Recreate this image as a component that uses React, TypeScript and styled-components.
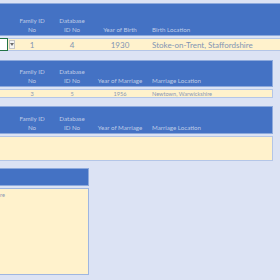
import styled, { createGlobalStyle } from 'styled-components'

const GlobalStyle = createGlobalStyle`
	html, body {
		margin: 0;
		background: #dce3f4;
		overflow: hidden;
		font-family: Lato, 'Liberation Sans', sans-serif;
	}
`

type Column = { title: [string, string], value?: string, align: 'center' | 'left' }

const birthColumns: Column[] = [
	{ title: ['Family ID', 'No'], value: '1', align: 'center' },
	{ title: ['Database', 'ID No'], value: '4', align: 'center' },
	{ title: ['', 'Year of Birth'], value: '1930', align: 'center' },
	{ title: ['', 'Birth Location'], value: 'Stoke-on-Trent, Staffordshire', align: 'left' }
]

const marriageColumns: Column[] = [
	{ title: ['Family ID', 'No'], value: '3', align: 'center' },
	{ title: ['Database', 'ID No'], value: '5', align: 'center' },
	{ title: ['', 'Year of Marriage'], value: '1956', align: 'center' },
	{ title: ['', 'Marriage Location'], value: 'Newtown, Warwickshire', align: 'left' }
]

const emptyColumns: Column[] = [
	{ title: ['Family ID', 'No'], align: 'center' },
	{ title: ['Database', 'ID No'], align: 'center' },
	{ title: ['', 'Year of Marriage'], align: 'center' },
	{ title: ['', 'Marriage Location'], align: 'left' }
]

export default function App () {
	return (
		<>
			<GlobalStyle />
			<Sheet>
				<Panel $width='300px' $top={4}>
					<Header $height={33}>
						<Cell />
						{birthColumns.map(c => (
							<HeadCell key={c.title[1]} $align={c.align}>
								<span>{c.title[0]}</span>
								<span>{c.title[1]}</span>
							</HeadCell>
						))}
					</Header>
					<Row $height={13} $size={8} $color='#8295b3'>
						<Combo>
							<ComboInput />
							<ComboButton>
								<svg width='4' height='3' viewBox='0 0 4 3'>
									<path d='M0 0h4L2 3z' fill='#6b6b6b' />
								</svg>
							</ComboButton>
						</Combo>
						{birthColumns.map(c => (
							<ValueCell key={c.title[1]} $align={c.align}>{c.value}</ValueCell>
						))}
					</Row>
				</Panel>

				<Panel $width='273px' $top={10}>
					<Header $height={27}>
						<Cell />
						{marriageColumns.map(c => (
							<HeadCell key={c.title[1]} $align={c.align}>
								<span>{c.title[0]}</span>
								<span>{c.title[1]}</span>
							</HeadCell>
						))}
					</Header>
					<Row $height={9} $size={5.6} $color='#8a98b4'>
						<Cell />
						{marriageColumns.map(c => (
							<ValueCell key={c.title[1]} $align={c.align}>{c.value}</ValueCell>
						))}
					</Row>
				</Panel>

				<Panel $width='273px' $top={9}>
					<Header $height={28}>
						<Cell />
						{emptyColumns.map(c => (
							<HeadCell key={c.title[1]} $align={c.align}>
								<span>{c.title[0]}</span>
								<span>{c.title[1]}</span>
							</HeadCell>
						))}
					</Header>
					<Row $height={25} $size={6} $color='#8a98b4' />
				</Panel>

				<Panel $width='89px' $top={8}>
					<Header $height={18} />
					<Notes>re</Notes>
				</Panel>
			</Sheet>
		</>
	)
}

const Sheet = styled.main`
	width: 280px;
	height: 280px;
	overflow: hidden;
	display: flex;
	flex-direction: column;
`

const Panel = styled.section<{ $width: string, $top: number }>`
	width: ${p => p.$width};
	margin-top: ${p => p.$top - 1}px;
	display: flex;
	flex-direction: column;
	gap: 2px;
	flex-shrink: 0;
`

const grid = `
	display: grid;
	grid-template-columns: 15px 34px 46px 50px 1fr;
	box-sizing: border-box;
`

const Header = styled.div<{ $height: number }>`
	${grid}
	height: ${p => p.$height}px;
	background: #4472c4;
	border: 1px solid #8eaadc;
	border-left: none;
	padding-bottom: 1px;
`

const Cell = styled.div``

const HeadCell = styled.div<{ $align: 'center' | 'left' }>`
	align-self: end;
	display: flex;
	flex-direction: column;
	align-items: ${p => p.$align === 'center' ? 'center' : 'flex-start'};
	padding-left: ${p => p.$align === 'left' ? '7px' : '0'};
	font-size: 6.2px;
	line-height: 8.4px;
	color: #bfcbe6;
	white-space: nowrap;
`

const Row = styled.div<{ $height: number, $size: number, $color: string }>`
	${grid}
	height: ${p => p.$height}px;
	background: #fff2cc;
	border: 1px solid #b4c6e7;
	border-left: none;
	align-items: center;
	font-size: ${p => p.$size}px;
	color: ${p => p.$color};
`

const ValueCell = styled.div<{ $align: 'center' | 'left' }>`
	text-align: ${p => p.$align};
	padding-left: ${p => p.$align === 'left' ? '7px' : '0'};
	white-space: nowrap;
	line-height: 1;
`

const Combo = styled.div`
	align-self: stretch;
	display: flex;
	margin: -1px 0;
`

const ComboInput = styled.div`
	width: 8px;
	background: #fff;
	border: 1px solid #217346;
	border-left: none;
	box-sizing: border-box;
`

const ComboButton = styled.div`
	width: 6px;
	margin: 2px 0 2px 1px;
	background: #f4f4f4;
	border: 1px solid #c6c6c6;
	box-sizing: border-box;
	display: flex;
	align-items: center;
	justify-content: center;
`

const Notes = styled.div`
	height: 87px;
	box-sizing: border-box;
	background: #fff2cc;
	border: 1px solid #9fb6e0;
	border-left: none;
	padding-top: 2px;
	font-size: 5.6px;
	line-height: 7px;
	color: #8a98b4;
`
